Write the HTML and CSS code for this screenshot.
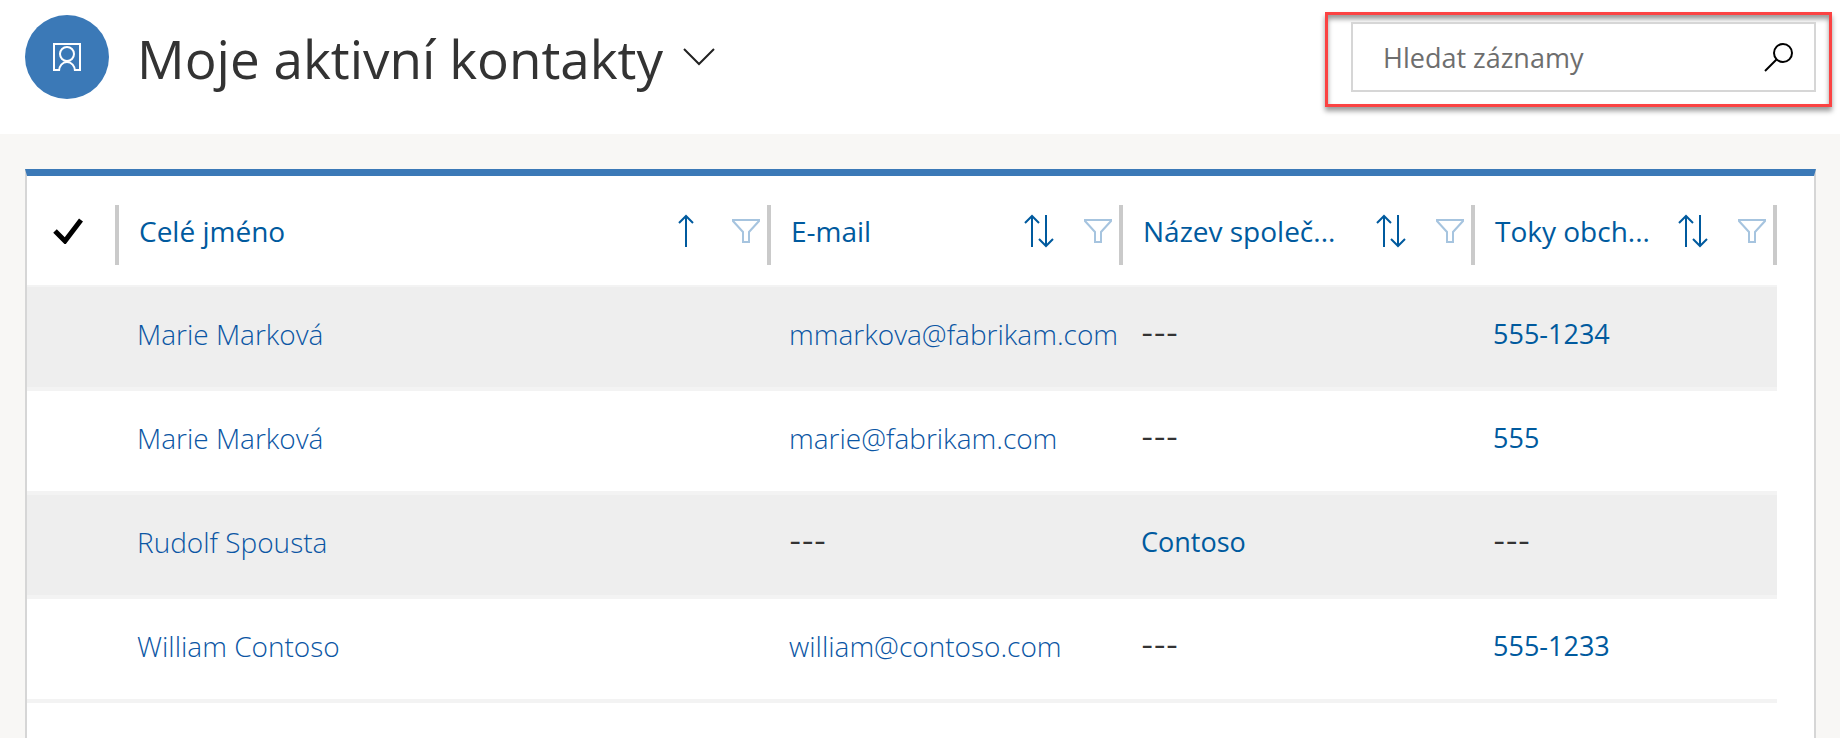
FILE: index.html
```html
<!DOCTYPE html>
<html lang="cs">
<head>
<meta charset="utf-8">
<title>Moje aktivní kontakty</title>
<meta name="viewport" content="width=device-width, initial-scale=1">
<link rel="stylesheet" href="styles.css">
</head>
<body>
<svg class="sprite" aria-hidden="true">
  <symbol id="icon-sort" viewBox="0 0 32 34">
    <path d="M9 33V2M2 9l7-7 7 7M23 1v31M16 25l7 7 7-7"/>
  </symbol>
  <symbol id="icon-filter" viewBox="0 0 28 24">
    <path d="M1 1h26v1L17 13v10h-6V13L1 2z"/>
  </symbol>
</svg>
<header class="page-header">
  <span class="avatar">
    <svg class="avatar-icon" viewBox="0 0 30 30" aria-hidden="true">
      <path d="M7 28H2V2h26v26h-5M15 5a7 7 0 1 0 0 14a7 7 0 1 0 0-14M7 29a8 9 0 0 1 16 0"/>
    </svg>
  </span>
  <h1 class="title">Moje aktivní kontakty</h1>
  <button class="view-button" type="button" aria-label="Vybrat zobrazení">
    <svg class="chevron" viewBox="0 0 32 18" aria-hidden="true"><path d="M1 1l15 15L31 1"/></svg>
  </button>
  <form class="search-frame" role="search">
    <div class="search-box">
      <input class="search-input" type="text" placeholder="Hledat záznamy" aria-label="Hledat záznamy">
      <button class="search-button" type="button" aria-label="Hledat">
        <svg class="search-icon" viewBox="0 0 30 30" aria-hidden="true"><circle cx="19" cy="11" r="9"/><path d="M13 17L1 29"/></svg>
      </button>
    </div>
  </form>
</header>
<main class="content">
  <section class="card">
    <table class="grid">
      <colgroup><col class="col-check"><col><col class="col-wide"><col class="col-wide"><col class="col-phone"></colgroup>
      <thead>
        <tr>
          <th scope="col"><div class="head head-check">
            <button class="icon-button" type="button" aria-label="Vybrat vše"><svg class="check" viewBox="0 0 30 26" aria-hidden="true"><path d="M2 13l10 10L28 2"/></svg></button>
          </div></th>
          <th scope="col"><div class="head">
            <span class="label">Celé jméno</span>
            <button class="icon-button" type="button" aria-label="Seřadit"><svg class="sort" viewBox="0 0 32 34" aria-hidden="true"><path d="M15 33V2M8 9l7-7 7 7"/></svg></button>
            <button class="icon-button" type="button" aria-label="Filtrovat"><svg class="filter" aria-hidden="true"><use href="#icon-filter"/></svg></button>
          </div></th>
          <th scope="col"><div class="head">
            <span class="label">E-mail</span>
            <button class="icon-button" type="button" aria-label="Seřadit"><svg class="sort" aria-hidden="true"><use href="#icon-sort"/></svg></button>
            <button class="icon-button" type="button" aria-label="Filtrovat"><svg class="filter" aria-hidden="true"><use href="#icon-filter"/></svg></button>
          </div></th>
          <th scope="col"><div class="head">
            <span class="label">Název společ...</span>
            <button class="icon-button" type="button" aria-label="Seřadit"><svg class="sort" aria-hidden="true"><use href="#icon-sort"/></svg></button>
            <button class="icon-button" type="button" aria-label="Filtrovat"><svg class="filter" aria-hidden="true"><use href="#icon-filter"/></svg></button>
          </div></th>
          <th scope="col"><div class="head">
            <span class="label">Toky obch...</span>
            <button class="icon-button" type="button" aria-label="Seřadit"><svg class="sort" aria-hidden="true"><use href="#icon-sort"/></svg></button>
            <button class="icon-button" type="button" aria-label="Filtrovat"><svg class="filter" aria-hidden="true"><use href="#icon-filter"/></svg></button>
          </div></th>
        </tr>
      </thead>
      <tbody>
        <tr><td></td><td><a class="light" href="#">Marie Marková</a></td><td><a class="light" href="#">mmarkova@fabrikam.com</a></td><td class="empty">---</td><td><a href="#">555-1234</a></td></tr>
        <tr><td></td><td><a class="light" href="#">Marie Marková</a></td><td><a class="light" href="#">marie@fabrikam.com</a></td><td class="empty">---</td><td><a href="#">555</a></td></tr>
        <tr><td></td><td><a class="light" href="#">Rudolf Spousta</a></td><td class="empty">---</td><td><a href="#">Contoso</a></td><td class="empty">---</td></tr>
        <tr><td></td><td><a class="light" href="#">William Contoso</a></td><td><a class="light" href="#">william@contoso.com</a></td><td class="empty">---</td><td><a href="#">555-1233</a></td></tr>
      </tbody>
    </table>
  </section>
</main>
</body>
</html>
```
FILE: styles.css
```css
* { box-sizing: border-box; }

body {
  margin: 0;
  min-height: 100vh;
  display: flex;
  flex-direction: column;
  background: #f8f7f5;
  color: #333;
  font-family: "Segoe UI", "Open Sans", "Noto Sans", sans-serif;
  font-size: 27px;
}

button {
  padding: 0;
  border: 0;
  background: none;
  font: inherit;
  cursor: pointer;
}

svg {
  display: block;
  fill: none;
  stroke-width: 2;
}

.sprite { position: absolute; width: 0; height: 0; }

.page-header {
  display: flex;
  align-items: flex-start;
  height: 134px;
  padding: 12px 8px 0 25px;
  background: #fff;
}

.avatar {
  flex: none;
  display: flex;
  align-items: center;
  justify-content: center;
  width: 84px;
  height: 84px;
  margin-top: 3px;
  border-radius: 50%;
  background: #3b79b7;
}

.avatar-icon { width: 30px; height: 30px; stroke: #fff; }

.title {
  margin: 0 0 0 28px;
  font-size: 53px;
  font-weight: 400;
  line-height: 94px;
  white-space: nowrap;
}

.view-button { margin: 36px 0 0 20px; }
.chevron { width: 32px; height: 18px; stroke: #222; }

.search-frame {
  width: 507px;
  margin-left: auto;
  padding: 7px 13px 12px 23px;
  border: 3px solid #fb4343;
  box-shadow: 0 4px 5px rgba(0, 0, 0, .4), inset 0 4px 5px rgba(0, 0, 0, .4);
}

.search-box {
  display: flex;
  align-items: center;
  height: 70px;
  padding: 0 20px 0 30px;
  border: 2px solid #d6d6d6;
}

.search-input {
  flex: 1;
  min-width: 0;
  padding: 0;
  border: 0;
  outline: 0;
  background: none;
  color: #333;
  font: inherit;
}

.search-input::placeholder { color: #6e6e6e; opacity: 1; }
.search-icon { width: 30px; height: 30px; stroke: #000; }

.content {
  flex: 1;
  display: flex;
  padding: 35px 24px 0 25px;
}

.card {
  flex: 1;
  padding-right: 37px;
  border: 2px solid #d6d6d6;
  border-top: 7px solid #3b79b7;
  border-bottom: 0;
  background: #fff;
}

.grid {
  width: 100%;
  table-layout: fixed;
  border-collapse: separate;
  border-spacing: 0;
}

.col-check { width: 92px; }
.col-wide { width: 352px; }
.col-phone { width: 302px; }

th {
  height: 111px;
  padding: 29px 0 0;
  border-bottom: 2px solid #f3f3f3;
  font-size: 28px;
  font-weight: 400;
  text-align: left;
  vertical-align: top;
}

.head {
  display: flex;
  align-items: center;
  height: 60px;
  padding: 0 7px 9px 20px;
  border-right: 4px solid #cacaca;
}

.head-check { padding-left: 26px; }
.label { flex: 1; color: #005a9e; white-space: nowrap; }
.icon-button { flex: none; }
.sort { width: 32px; height: 34px; margin-right: 29px; stroke: #005a9e; }
.filter { width: 28px; height: 24px; stroke: #a6c4df; }
.check { width: 30px; height: 26px; stroke: #000; stroke-width: 5; }

td {
  height: 104px;
  padding: 0 0 7px 18px;
  border-bottom: 4px solid #f3f3f3;
  white-space: nowrap;
}

tbody tr:nth-child(odd) td { background: #eee; }

a { color: #005a9e; text-decoration: none; }
.light { color: #0b56a4; font-size: 28px; font-weight: 300; }
.empty { font-family: Inter, sans-serif; }
```
